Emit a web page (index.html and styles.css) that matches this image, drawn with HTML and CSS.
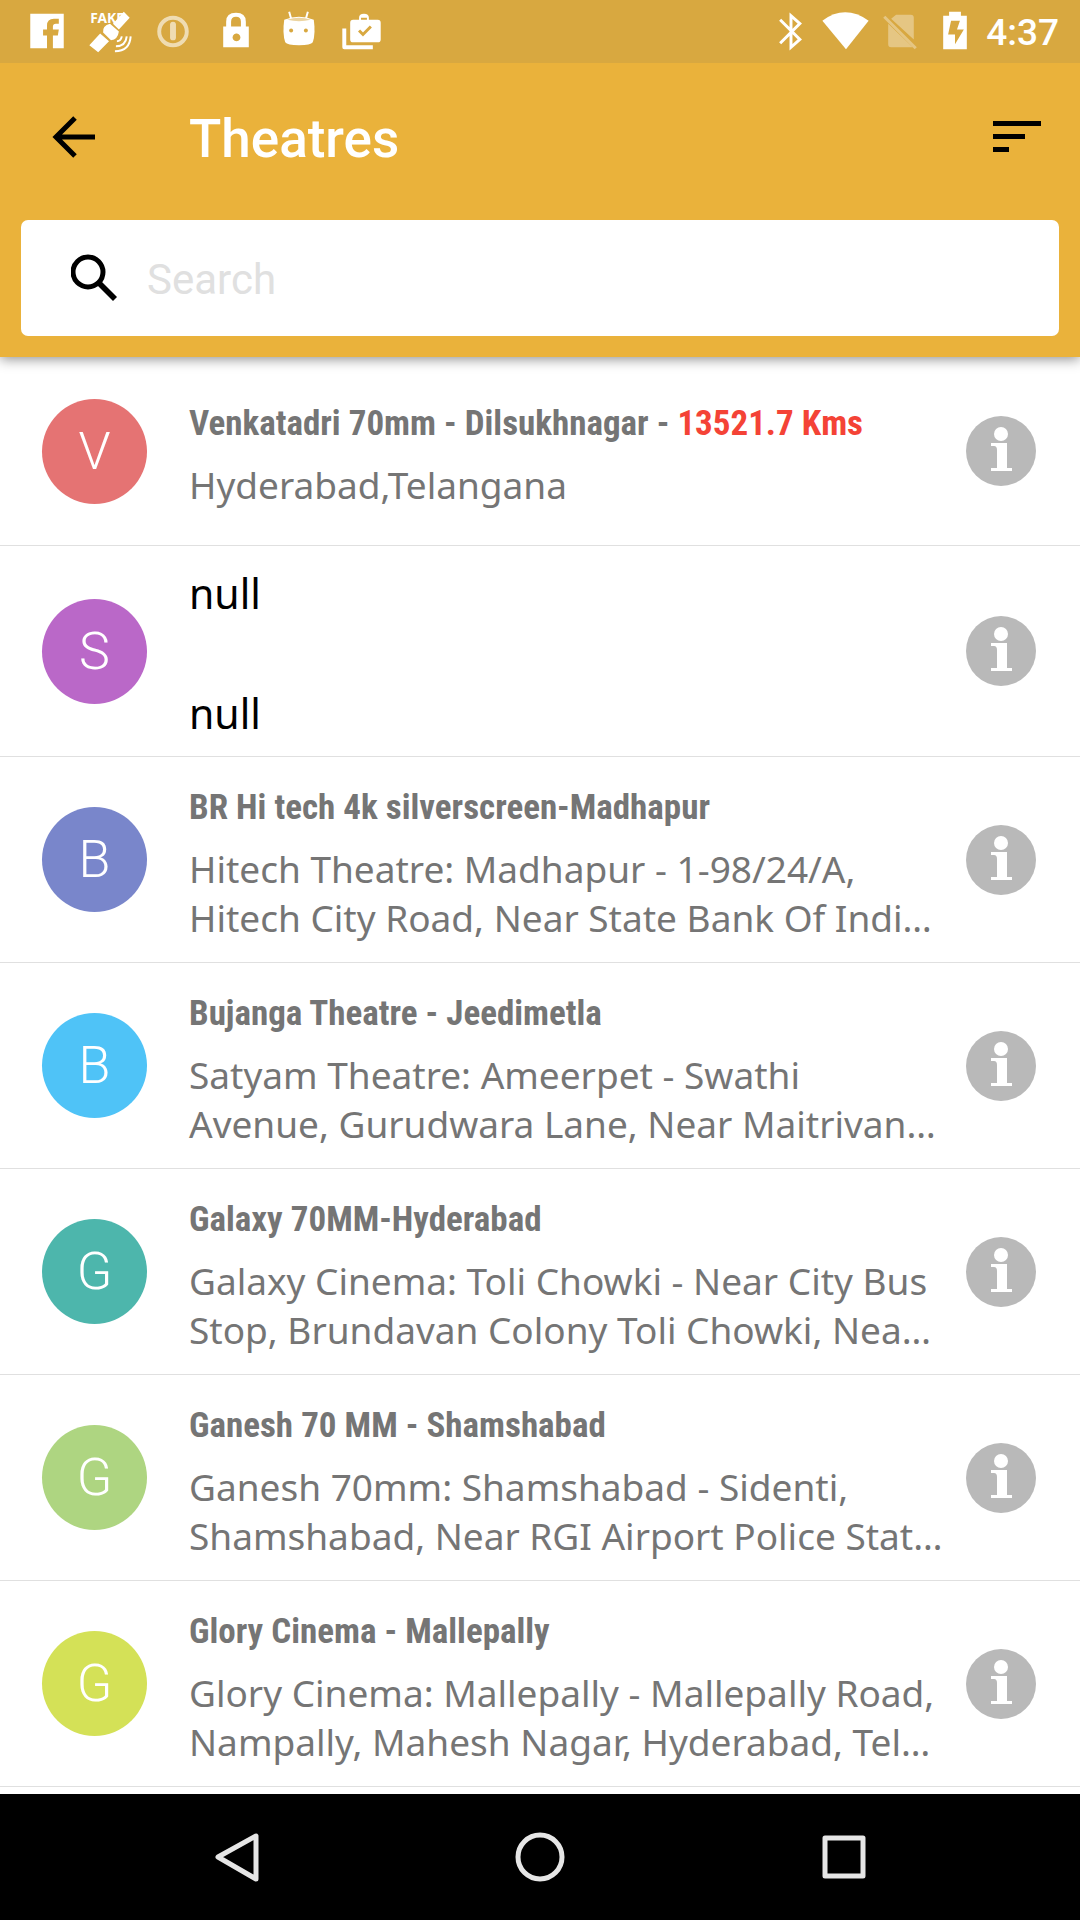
FILE: index.html
```html
<!DOCTYPE html>
<html lang="en">
<head>
<meta charset="utf-8">
<meta name="viewport" content="width=device-width, initial-scale=1">
<title>Theatres</title>
<link rel="stylesheet" href="styles.css">
</head>
<body>
<svg class="defs" aria-hidden="true">
  <symbol id="info" viewBox="0 0 70 70">
    <circle cx="35" cy="35" r="35" fill="#b9b9b9"/>
    <circle cx="35" cy="18" r="7" fill="#fff"/>
    <path d="M25 27h16v25h5v3H25v-3h6V34q0-4-3-4h-3z" fill="#fff"/>
  </symbol>
</svg>

<div class="screen">
  <header class="header">
    <div class="status">
      <div class="notifications">
        <svg viewBox="0 0 48 64"><path fill="#fff" d="M7 14h34v35H30V36h5l1-6h-6v-3q0-3 3-3h3v-5h-5q-7 0-7 7v4h-4v6h4v13H7z"/></svg>
        <svg viewBox="0 0 48 64"><text class="fake" x="4" y="23">FAKE</text><path fill="#fff" d="M38 12l6 6-11 12-6-6zM24 24l9 8q-1 8-8 9l-8-8q-1-7 7-9zM14 34l9 8-11 11-9-7z"/><path d="M31 42q4 0 5-5M30 47q10 0 11-10M29 52q15 0 16-15" fill="none" stroke="#fff" stroke-width="2"/></svg>
        <svg viewBox="0 0 48 64" opacity=".6"><circle cx="24" cy="32" r="14" fill="none" stroke="#fff" stroke-width="4"/><path d="M24 25v13" stroke="#fff" stroke-width="6" stroke-linecap="round"/></svg>
        <svg viewBox="0 0 48 64"><path fill="#fff" fill-rule="evenodd" d="M11 27h3v-5q0-9 10-9t10 9v5h3v21H11zM19 27h10v-5q0-5-5-5t-5 5zM24 34a4 4 0 1 0 1 0z"/></svg>
        <svg viewBox="0 0 48 64"><path fill="#fff" d="M9 20q15-6 30 0 2 14-1 23-2 3-14 3T10 43Q7 34 9 20z"/><path d="M14 12l2 7M33 12l-2 7" stroke="#fff" stroke-width="2"/><path d="M12 20q12-4 24 0-12 3-24 0z" fill="#ecd4a0"/><circle cx="16" cy="31" r="2" fill="#d8a840"/><circle cx="31" cy="31" r="2" fill="#d8a840"/></svg>
        <svg viewBox="0 0 48 64"><path fill="#fff" fill-rule="evenodd" d="M15 20h6v-2q0-4 5-4t5 4v2h9q3 0 3 3v17q0 3-3 3H15q-3 0-3-3V23q0-3 3-3zM23 20h6v-2h-6z"/><path d="M6 29v19h29" fill="none" stroke="#fff" stroke-width="4" stroke-linejoin="round"/><path d="M21 31l4 4 8-8" fill="none" stroke="#d8a840" stroke-width="3"/></svg>
      </div>
      <div class="system">
        <svg viewBox="0 0 48 64"><path d="M14 20l20 20-9 8V16l9 8-20 20" fill="none" stroke="#fff" stroke-width="3"/></svg>
        <svg viewBox="0 0 48 64"><path fill="#fff" d="M1 21q23-17 47 0L25 50z"/></svg>
        <svg viewBox="0 0 48 64" opacity=".35"><path fill="#fff" d="M20 15h15q3 0 3 3v22L15 19zM12 24l25 24H15q-3 0-3-3z"/><path d="M8 17l32 32" stroke="#fff" stroke-width="3"/></svg>
        <svg viewBox="0 0 48 64"><path fill="#fff" fill-rule="evenodd" d="M12 16h6v-4h12v4h6v34H12zM20 21l-3 14h7v10l9-15h-7l3-9z"/></svg>
        <time>4:37</time>
      </div>
    </div>
    <div class="toolbar">
      <button class="icon-button" type="button" aria-label="Back"><svg viewBox="0 0 48 48"><path d="M45 24H7M25 5L6 24l19 19" fill="none" stroke="#000" stroke-width="5"/></svg></button>
      <h1>Theatres</h1>
      <button class="icon-button" type="button" aria-label="Sort"><svg viewBox="0 0 48 48"><path d="M0 8h48v5H0zM0 21h32v5H0zM0 34h16v5H0z"/></svg></button>
    </div>
    <label class="search">
      <svg viewBox="0 0 48 48"><circle cx="17" cy="18" r="15" fill="none" stroke="#000" stroke-width="5"/><path d="M27 29l3-2 16 16-4 4-15-15z"/></svg>
      <input type="search" placeholder="Search" aria-label="Search theatres">
    </label>
  </header>

  <main>
    <ul class="list">
      <li class="row short">
        <span class="avatar coral">V</span>
        <div class="text"><h2>Venkatadri 70mm - Dilsukhnagar - <span class="distance">13521.7 Kms</span></h2><p>Hyderabad,Telangana</p></div>
        <button class="info" type="button" aria-label="About Venkatadri 70mm"><svg><use href="#info"/></svg></button>
      </li>
      <li class="row unnamed">
        <span class="avatar purple">S</span>
        <div class="text"><p>null</p><p>null</p></div>
        <button class="info" type="button" aria-label="About this theatre"><svg><use href="#info"/></svg></button>
      </li>
      <li class="row">
        <span class="avatar indigo">B</span>
        <div class="text"><h2>BR Hi tech 4k silverscreen-Madhapur</h2><p>Hitech Theatre: Madhapur - 1-98/24/A,<br>Hitech City Road, Near State Bank Of Indi…</p></div>
        <button class="info" type="button" aria-label="About BR Hi tech 4k silverscreen"><svg><use href="#info"/></svg></button>
      </li>
      <li class="row">
        <span class="avatar blue">B</span>
        <div class="text"><h2>Bujanga Theatre - Jeedimetla</h2><p>Satyam Theatre: Ameerpet - Swathi<br>Avenue, Gurudwara Lane, Near Maitrivan…</p></div>
        <button class="info" type="button" aria-label="About Bujanga Theatre"><svg><use href="#info"/></svg></button>
      </li>
      <li class="row">
        <span class="avatar teal">G</span>
        <div class="text"><h2>Galaxy 70MM-Hyderabad</h2><p>Galaxy Cinema: Toli Chowki - Near City Bus<br>Stop, Brundavan Colony Toli Chowki, Nea…</p></div>
        <button class="info" type="button" aria-label="About Galaxy 70MM"><svg><use href="#info"/></svg></button>
      </li>
      <li class="row">
        <span class="avatar green">G</span>
        <div class="text"><h2>Ganesh 70 MM - Shamshabad</h2><p>Ganesh 70mm: Shamshabad - Sidenti,<br>Shamshabad, Near RGI Airport Police Stat…</p></div>
        <button class="info" type="button" aria-label="About Ganesh 70 MM"><svg><use href="#info"/></svg></button>
      </li>
      <li class="row">
        <span class="avatar lime">G</span>
        <div class="text"><h2>Glory Cinema - Mallepally</h2><p>Glory Cinema: Mallepally - Mallepally Road,<br>Nampally, Mahesh Nagar, Hyderabad, Tel…</p></div>
        <button class="info" type="button" aria-label="About Glory Cinema"><svg><use href="#info"/></svg></button>
      </li>
    </ul>
  </main>

  <nav class="navbar" aria-label="System">
    <button type="button" aria-label="Back"><svg viewBox="0 0 54 54"><path d="M46 6v43L8 27z"/></svg></button>
    <button type="button" aria-label="Home"><svg viewBox="0 0 54 54"><circle cx="27" cy="27" r="22"/></svg></button>
    <button type="button" aria-label="Recent apps"><svg viewBox="0 0 54 54"><path d="M9 8h38v38H9z"/></svg></button>
  </nav>
</div>
</body>
</html>
```

FILE: styles.css
```css
* {
  box-sizing: border-box;
}

body {
  margin: 0;
  background: #fff;
  font-family: Roboto, sans-serif;
}

h1, h2, p, ul {
  margin: 0;
  padding: 0;
}

button {
  padding: 0;
  border: 0;
  background: none;
  cursor: pointer;
}

svg {
  display: block;
  flex: none;
}

.defs {
  display: none;
}

.screen {
  display: flex;
  flex-direction: column;
  min-height: 100vh;
}

.header {
  padding-bottom: 21px;
  background: #eab23b;
  box-shadow: 0 2px 12px rgba(0, 0, 0, 0.45);
}

.status {
  display: flex;
  justify-content: space-between;
  padding: 0 21px 0 23px;
  background: #d8a840;
}

.status svg {
  width: 48px;
  height: 63px;
}

.fake {
  fill: #fff;
  font: 700 14px "Noto Sans", sans-serif;
}

.notifications,
.system {
  display: flex;
  align-items: center;
}

.notifications {
  gap: 15px;
}

.system {
  gap: 7px;
}

time {
  height: 63px;
  padding-top: 3px;
  color: #fff;
  font-size: 37px;
  font-weight: 500;
  line-height: 60px;
}

.toolbar {
  display: flex;
  align-items: center;
  height: 147px;
  padding: 0 39px 0 50px;
}

.toolbar h1 {
  flex: 1;
  padding: 4px 0 0 91px;
  color: #fff;
  font-size: 53px;
  font-weight: 500;
  line-height: 60px;
}

.icon-button svg {
  width: 48px;
  height: 48px;
}

.search {
  display: flex;
  align-items: center;
  gap: 28px;
  height: 116px;
  margin: 10px 21px 0;
  padding: 0 50px;
  border-radius: 7px;
  background: #fff;
}

.search svg {
  width: 48px;
  height: 48px;
}

.search input {
  flex: 1;
  min-width: 0;
  padding: 4px 0 0;
  border: 0;
  outline: 0;
  background: none;
  font: 400 42px/50px Roboto, sans-serif;
}

.search input::placeholder {
  color: #e0e0e0;
}

main {
  flex: 1;
}

.list {
  list-style: none;
}

.row {
  display: flex;
  align-items: center;
  padding: 20px 44px 20px 42px;
  border-bottom: 1px solid #e0e0e0;
}

.short {
  padding-top: 36px;
  padding-bottom: 36px;
}

.avatar {
  flex: none;
  width: 105px;
  border-radius: 50%;
  color: #fff;
  font-size: 52px;
  font-weight: 300;
  line-height: 105px;
  text-align: center;
}

.coral { background: #e57373; }
.purple { background: #ba68c8; }
.indigo { background: #7986cb; }
.blue { background: #4fc3f7; }
.teal { background: #4db6ac; }
.green { background: #aed581; }
.lime { background: #d4e157; }

.text {
  flex: 1;
  min-width: 0;
  padding: 4px 0 0 42px;
  color: #757575;
  white-space: nowrap;
}

.text h2 {
  padding-bottom: 9px;
  font-family: "Roboto Condensed", "Liberation Sans Narrow", Roboto, sans-serif;
  font-size: 35px;
  font-weight: 700;
  line-height: 54px;
}

.distance {
  color: #f44336;
}

.text p {
  font-family: "Noto Sans", sans-serif;
  font-size: 37px;
  line-height: 49px;
}

.unnamed {
  padding-top: 14px;
  padding-bottom: 14px;
}

.unnamed .text {
  display: grid;
  gap: 62px;
}

.unnamed p {
  color: #000;
  font-size: 41px;
  line-height: 58px;
}

.info svg {
  width: 70px;
  height: 70px;
}

.navbar {
  display: flex;
  justify-content: center;
  gap: 249px;
  padding: 36px 0;
  background: #000;
}

.navbar svg {
  width: 54px;
  height: 54px;
  fill: none;
  stroke: #e6e6e6;
  stroke-width: 5;
  stroke-linejoin: round;
}
```
